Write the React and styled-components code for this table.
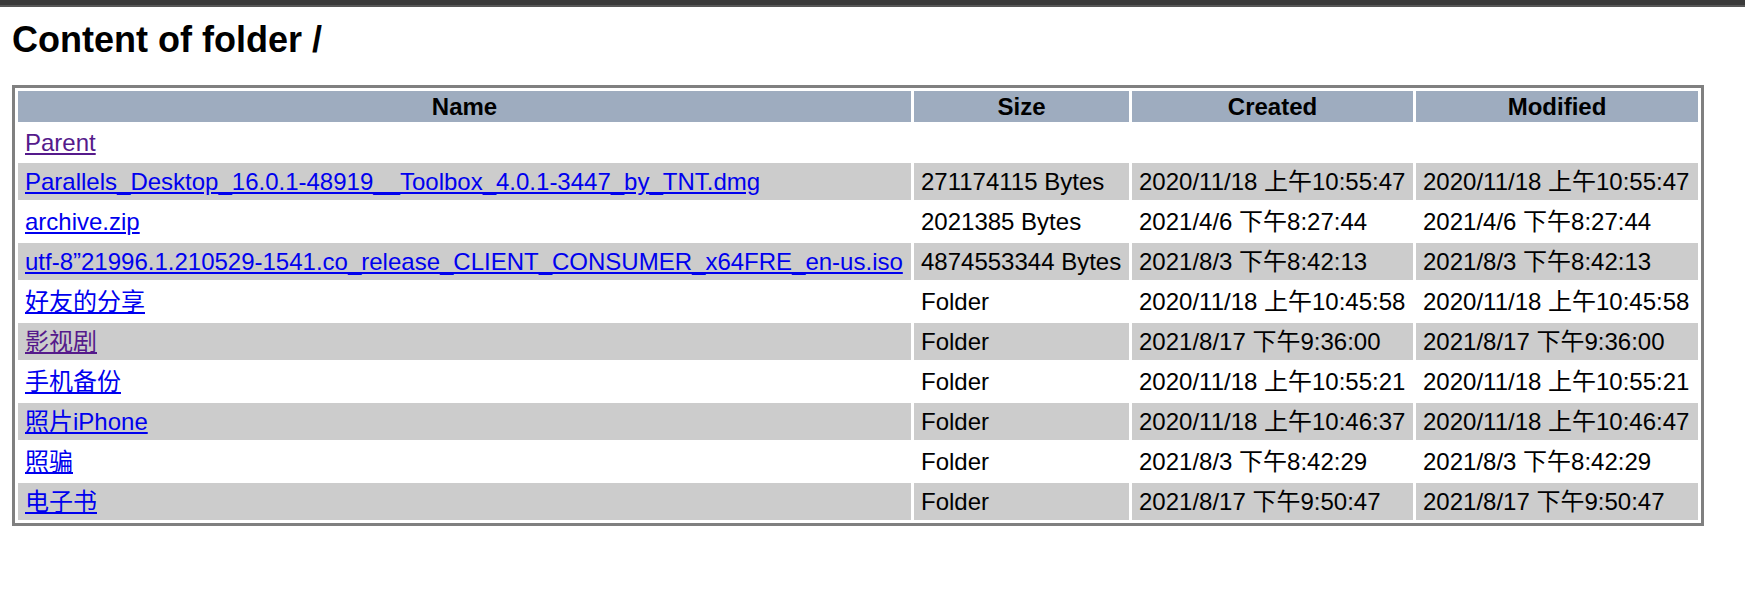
import React from "react";
import styled, { createGlobalStyle } from "styled-components";

const GlobalStyle = createGlobalStyle`
  html, body {
    margin: 0;
    padding: 0;
    background: #ffffff;
  }
  body {
    font-family: "Liberation Sans", Arial, "Noto Sans CJK SC", sans-serif;
    color: #000000;
  }
`;

const TopBar = styled.div`
  height: 5px;
  background: #3a3a3a;
  border-bottom: 2px solid #575757;
`;

const Page = styled.main`
  padding: 0 12px;
`;

const Title = styled.h2`
  margin: 12px 0 25px;
  font-size: 36px;
  line-height: 41px;
  font-weight: bold;
  font-family: "Liberation Sans", Arial, "Noto Sans CJK SC", sans-serif;
`;

const Listing = styled.table`
  table-layout: fixed;
  width: 1692px;
  border: 3px solid #808080;
  border-spacing: 3px;
  font-size: 24px;
  line-height: 28px;
`;

const Col = styled.col`
  width: ${(p) => p.$w}px;
`;

const HeadCell = styled.th`
  background: #9eacbf;
  padding: 1.5px 6px;
  font-weight: bold;
  text-align: center;
  white-space: nowrap;
`;

const Row = styled.tr`
  background: ${(p) => (p.$shaded ? "#cccccc" : "#ffffff")};
`;

const Cell = styled.td`
  padding: ${(p) => (p.$compact ? "3.5px" : "4.5px")} 7px;
  text-align: left;
  white-space: nowrap;
  overflow: hidden;
`;

const FileLink = styled.a`
  color: ${(p) => (p.$visited ? "#551a8b" : "#0000ee")};
  text-decoration: underline;
`;

const entries = [
  {
    name: "Parallels_Desktop_16.0.1-48919__Toolbox_4.0.1-3447_by_TNT.dmg",
    size: "271174115 Bytes",
    created: "2020/11/18 上午10:55:47",
    modified: "2020/11/18 上午10:55:47",
  },
  {
    name: "archive.zip",
    size: "2021385 Bytes",
    created: "2021/4/6 下午8:27:44",
    modified: "2021/4/6 下午8:27:44",
  },
  {
    name: "utf-8\u201D21996.1.210529-1541.co_release_CLIENT_CONSUMER_x64FRE_en-us.iso",
    size: "4874553344 Bytes",
    created: "2021/8/3 下午8:42:13",
    modified: "2021/8/3 下午8:42:13",
  },
  {
    name: "好友的分享",
    size: "Folder",
    created: "2020/11/18 上午10:45:58",
    modified: "2020/11/18 上午10:45:58",
  },
  {
    name: "影视剧",
    visited: true,
    size: "Folder",
    created: "2021/8/17 下午9:36:00",
    modified: "2021/8/17 下午9:36:00",
  },
  {
    name: "手机备份",
    size: "Folder",
    created: "2020/11/18 上午10:55:21",
    modified: "2020/11/18 上午10:55:21",
  },
  {
    name: "照片iPhone",
    size: "Folder",
    created: "2020/11/18 上午10:46:37",
    modified: "2020/11/18 上午10:46:47",
  },
  {
    name: "照骗",
    size: "Folder",
    created: "2021/8/3 下午8:42:29",
    modified: "2021/8/3 下午8:42:29",
  },
  {
    name: "电子书",
    size: "Folder",
    created: "2021/8/17 下午9:50:47",
    modified: "2021/8/17 下午9:50:47",
  },
];

export default function App() {
  return (
    <>
      <GlobalStyle />
      <TopBar />
      <Page>
        <Title>Content of folder /</Title>
        <Listing>
          <colgroup>
            <Col $w={893} />
            <Col $w={215} />
            <Col $w={281} />
            <Col $w={282} />
          </colgroup>
          <thead>
            <tr>
              <HeadCell>Name</HeadCell>
              <HeadCell>Size</HeadCell>
              <HeadCell>Created</HeadCell>
              <HeadCell>Modified</HeadCell>
            </tr>
          </thead>
          <tbody>
            <Row>
              <Cell $compact>
                <FileLink href="#parent" $visited>
                  Parent
                </FileLink>
              </Cell>
              <Cell $compact />
              <Cell $compact />
              <Cell $compact />
            </Row>
            {entries.map((e, i) => (
              <Row key={e.name} $shaded={i % 2 === 0}>
                <Cell>
                  <FileLink href={"#" + i} $visited={e.visited}>
                    {e.name}
                  </FileLink>
                </Cell>
                <Cell>{e.size}</Cell>
                <Cell>{e.created}</Cell>
                <Cell>{e.modified}</Cell>
              </Row>
            ))}
          </tbody>
        </Listing>
      </Page>
    </>
  );
}
